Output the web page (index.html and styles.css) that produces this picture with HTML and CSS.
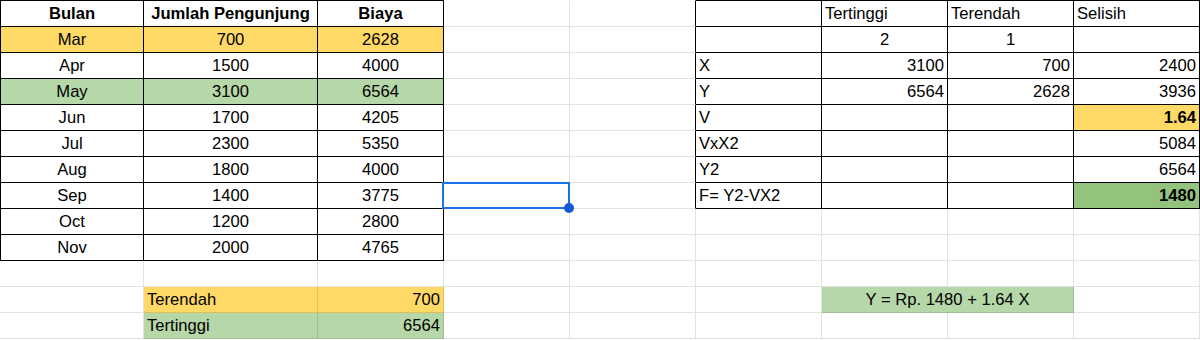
FILE: index.html
```html
<!DOCTYPE html>
<html>
<head>
<meta charset="utf-8">
<link rel="stylesheet" href="styles.css">
</head>
<body>
<div class="sheet">
  <!-- row 1 -->
  <div class="c r1 ca t tt tl ctr b">Bulan</div>
  <div class="c r1 t tt ctr b">Jumlah Pengunjung</div>
  <div class="c r1 t tt ctr b">Biaya</div>
  <div class="c r1"></div>
  <div class="c r1 edge"></div>
  <div class="c r1 t tt"></div>
  <div class="c r1 t tt">Tertinggi</div>
  <div class="c r1 t tt">Terendah</div>
  <div class="c r1 t tt">Selisih</div>
  <!-- row 2 -->
  <div class="c ca t tl ctr yel">Mar</div>
  <div class="c t ctr yel">700</div>
  <div class="c t ctr yel">2628</div>
  <div class="c"></div>
  <div class="c edge"></div>
  <div class="c t"></div>
  <div class="c t ctr">2</div>
  <div class="c t ctr">1</div>
  <div class="c t"></div>
  <!-- row 3 -->
  <div class="c ca t tl ctr">Apr</div>
  <div class="c t ctr">1500</div>
  <div class="c t ctr">4000</div>
  <div class="c"></div>
  <div class="c edge"></div>
  <div class="c t">X</div>
  <div class="c t rt">3100</div>
  <div class="c t rt">700</div>
  <div class="c t rt">2400</div>
  <!-- row 4 -->
  <div class="c ca t tl ctr grn">May</div>
  <div class="c t ctr grn">3100</div>
  <div class="c t ctr grn">6564</div>
  <div class="c"></div>
  <div class="c edge"></div>
  <div class="c t">Y</div>
  <div class="c t rt">6564</div>
  <div class="c t rt">2628</div>
  <div class="c t rt">3936</div>
  <!-- row 5 -->
  <div class="c ca t tl ctr">Jun</div>
  <div class="c t ctr">1700</div>
  <div class="c t ctr">4205</div>
  <div class="c"></div>
  <div class="c edge"></div>
  <div class="c t">V</div>
  <div class="c t"></div>
  <div class="c t"></div>
  <div class="c t rt b yel">1.64</div>
  <!-- row 6 -->
  <div class="c ca t tl ctr">Jul</div>
  <div class="c t ctr">2300</div>
  <div class="c t ctr">5350</div>
  <div class="c"></div>
  <div class="c edge"></div>
  <div class="c t">VxX2</div>
  <div class="c t"></div>
  <div class="c t"></div>
  <div class="c t rt">5084</div>
  <!-- row 7 -->
  <div class="c ca t tl ctr">Aug</div>
  <div class="c t ctr">1800</div>
  <div class="c t ctr">4000</div>
  <div class="c"></div>
  <div class="c edge"></div>
  <div class="c t">Y2</div>
  <div class="c t"></div>
  <div class="c t"></div>
  <div class="c t rt">6564</div>
  <!-- row 8 -->
  <div class="c ca t tl ctr">Sep</div>
  <div class="c t ctr">1400</div>
  <div class="c t ctr">3775</div>
  <div class="c sel"><span class="sel-box"></span><span class="sel-handle"></span></div>
  <div class="c edge"></div>
  <div class="c t">F= Y2-VX2</div>
  <div class="c t"></div>
  <div class="c t"></div>
  <div class="c t rt b dgrn">1480</div>
  <!-- row 9 -->
  <div class="c ca t tl ctr">Oct</div>
  <div class="c t ctr">1200</div>
  <div class="c t ctr">2800</div>
  <div class="c"></div>
  <div class="c"></div>
  <div class="c"></div>
  <div class="c"></div>
  <div class="c"></div>
  <div class="c"></div>
  <!-- row 10 -->
  <div class="c ca t tl ctr">Nov</div>
  <div class="c t ctr">2000</div>
  <div class="c t ctr">4765</div>
  <div class="c"></div>
  <div class="c"></div>
  <div class="c"></div>
  <div class="c"></div>
  <div class="c"></div>
  <div class="c"></div>
  <!-- row 11 -->
  <div class="c ca"></div>
  <div class="c"></div>
  <div class="c"></div>
  <div class="c"></div>
  <div class="c"></div>
  <div class="c"></div>
  <div class="c"></div>
  <div class="c"></div>
  <div class="c"></div>
  <!-- row 12 -->
  <div class="c ca"></div>
  <div class="c yel tint">Terendah</div>
  <div class="c rt yel tint">700</div>
  <div class="c"></div>
  <div class="c"></div>
  <div class="c"></div>
  <div class="c span2 ctr grn tint">Y = Rp. 1480 + 1.64 X</div>
  <div class="c"></div>
  <!-- row 13 -->
  <div class="c ca"></div>
  <div class="c grn tint">Tertinggi</div>
  <div class="c rt grn tint">6564</div>
  <div class="c"></div>
  <div class="c"></div>
  <div class="c"></div>
  <div class="c"></div>
  <div class="c"></div>
  <div class="c"></div>
</div>
</body>
</html>
```

FILE: styles.css
```css
html, body {
  margin: 0;
  padding: 0;
  background: #ffffff;
}

body {
  font-family: "Liberation Sans", Arial, sans-serif;
  font-size: 16.6px;
  color: #000000;
}

.sheet {
  display: grid;
  grid-template-columns: 144px 174px repeat(7, 126px);
  grid-template-rows: 27px repeat(12, 26px);
}

.c {
  box-sizing: border-box;
  border-right: 1px solid #e2e2e2;
  border-bottom: 1px solid #e2e2e2;
  padding: 0 3px;
  line-height: 25px;
  white-space: nowrap;
  overflow: hidden;
  text-align: left;
}

.r1 {
  border-top: 1px solid transparent;
}

.ca {
  border-left: 1px solid transparent;
}

.t {
  border-right-color: #000000;
  border-bottom-color: #000000;
}

.tt {
  border-top-color: #000000;
}

.tl {
  border-left-color: #000000;
}

.edge {
  border-right-color: #000000;
}

.ctr {
  text-align: center;
}

.rt {
  text-align: right;
}

.b {
  font-weight: bold;
}

.yel {
  background: #ffd966;
}

.grn {
  background: #b6d7a8;
}

.dgrn {
  background: #93c47d;
}

.tint {
  border-right-color: rgba(0, 0, 0, 0.12);
  border-bottom-color: rgba(0, 0, 0, 0.12);
}

.span2 {
  grid-column: span 2;
}

.sel {
  position: relative;
  overflow: visible;
}

.sel-box {
  position: absolute;
  left: -2px;
  top: -1px;
  width: 128px;
  height: 27px;
  box-sizing: border-box;
  border: 2px solid #1a73e8;
  z-index: 2;
}

.sel-handle {
  position: absolute;
  left: 120px;
  top: 20px;
  width: 10px;
  height: 10px;
  border-radius: 50%;
  background: #1558d6;
  z-index: 3;
}
```
